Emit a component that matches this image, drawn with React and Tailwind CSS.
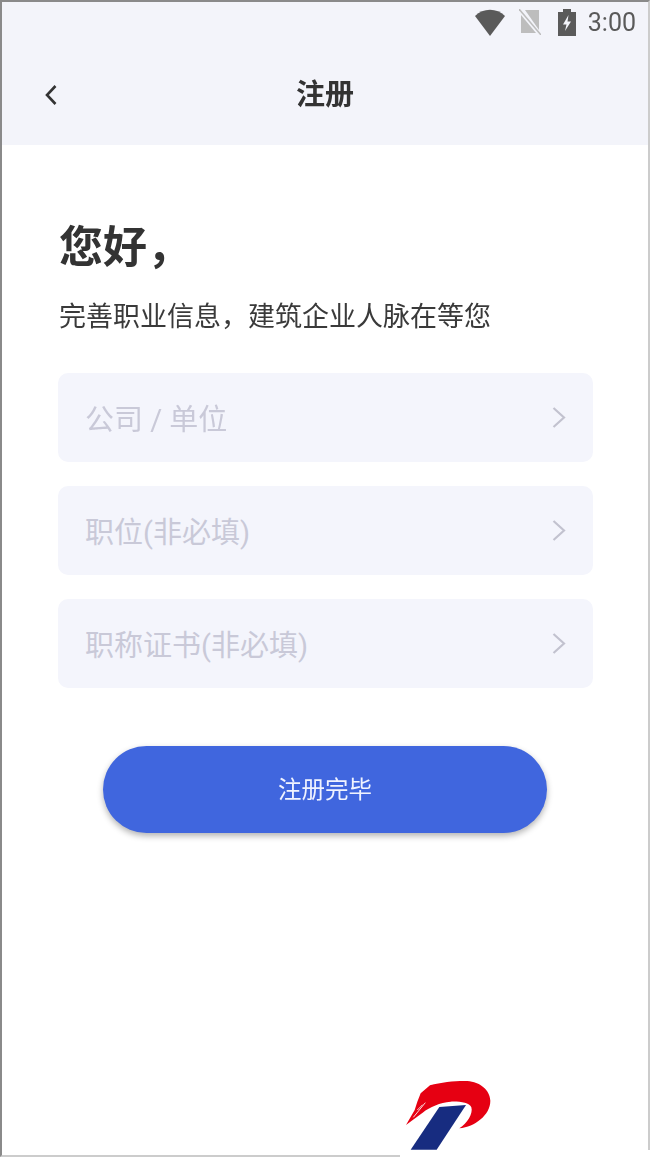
import React from "react";

const cjk = "font-['Roboto','Noto_Sans_CJK_SC',sans-serif]";

function Chevron() {
  return (
    <svg width="14" height="24" viewBox="0 0 14 24" fill="none" stroke="#c2c2cf" strokeWidth="2.2">
      <path d="M1.5 2 L12 11.5 L1.5 21" />
    </svg>
  );
}

function Field({ label }) {
  return (
    <div className="flex h-[89px] items-center justify-between rounded-[10px] bg-[#f4f5fc] pl-[27px] pr-[27px]">
      <span className="pt-[5px] text-[29px] leading-none text-[#c9c9d8]">{label}</span>
      <Chevron />
    </div>
  );
}

function StatusBar() {
  return (
    <div className="flex h-[46px] items-center justify-end pb-[6px] pr-[12px]">
      <svg width="30" height="27" viewBox="0 0 30 27" className="mr-[14px]">
        <path d="M0 7 C8 -1.5 22 -1.5 30 7 L15 27 Z" fill="#5a5a5a" />
      </svg>
      <svg width="22" height="26" viewBox="0 0 22 26" className="mr-[16px]">
        <path d="M6 1 H20 V21 Z" fill="#bdbdbd" />
        <path d="M2 6 L17 24 H2 Z" fill="#bdbdbd" />
        <path d="M0 0 L22 26" stroke="#bdbdbd" strokeWidth="1.5" />
      </svg>
      <svg width="20" height="27" viewBox="0 0 20 27" className="mr-[11px]">
        <path d="M6 0 H14 V3 H19 V27 H1 V3 H6 Z" fill="#5a5a5a" />
        <path d="M11.5 6 L6 15.5 H9.5 L8 22 L14 12.5 H10.5 Z" fill="#f3f4fa" />
      </svg>
      <span className="font-['Roboto',sans-serif] text-[25px] leading-none text-[#5a5a5a]">3:00</span>
    </div>
  );
}

function Logo() {
  return (
    <svg width="130" height="97" viewBox="0 0 390 291" className="absolute left-[380px] top-[1060px]">
      <path
        d="M78 195 L104 150 L112 125 L122 100 L150 76 C185 66 230 62 262 63 C300 66 330 90 331 122 C331 165 285 200 238 205 C262 190 280 160 274 142 C268 128 240 124 212 125 C180 128 150 140 128 158 C112 170 95 182 78 195 Z"
        fill="#e60012"
      />
      <path d="M100 172 L136 128 M112 150 L128 134" stroke="#ffffff" strokeWidth="2.5" fill="none" />
      <path d="M178 141 L258 135 L170 269 L92 269 Z" fill="#172c80" />
    </svg>
  );
}

export default function App() {
  return (
    <div className={`relative h-[1157px] w-[650px] overflow-hidden bg-white ${cjk}`}>
      <div className="flex h-full flex-col border-t-2 border-r-2 border-b-2 border-l-2 border-t-[#8a8a8a] border-r-[#cccccc] border-b-[#cccccc] border-l-[#8a8a8a]">
        <header className="h-[143px] bg-[#f3f4fa] blur-[0.5px]">
          <StatusBar />
          <div className="relative flex h-[97px] items-center justify-center pb-[2px]">
            <svg width="14" height="24" viewBox="0 0 14 24" fill="none" stroke="#333333" strokeWidth="2.6" className="absolute left-[42px] top-[35px]">
              <path d="M11.5 3 L3 12 L11.5 21" />
            </svg>
            <h1 className="text-[29px] font-bold leading-none text-[#333333]">注册</h1>
          </div>
        </header>

        <main className="flex flex-col px-[56px] pt-[75px] blur-[0.5px]">
          <h2 className="ml-[1px] text-[44px] font-bold leading-[56px] text-[#333333]">您好，</h2>
          <p className="ml-[1px] mt-[21px] text-[27px] leading-[40px] text-[#3a3a3a]">完善职业信息，建筑企业人脉在等您</p>

          <div className="mr-[-1px] mt-[36px] flex flex-col gap-[24px]">
            <Field label="公司 / 单位" />
            <Field label="职位(非必填)" />
            <Field label="职称证书(非必填)" />
          </div>

          <button className="mx-auto mt-[58px] h-[87px] w-[444px] rounded-full bg-[#4066de] pt-[3px] text-[23.5px] text-[#f0f3ff] shadow-[0_3px_6px_rgba(0,0,0,0.3)]">
            注册完毕
          </button>
        </main>
      </div>
      <div className="absolute left-[400px] top-[1150px] h-[7px] w-[250px] bg-white" />
      <Logo />
    </div>
  );
}
